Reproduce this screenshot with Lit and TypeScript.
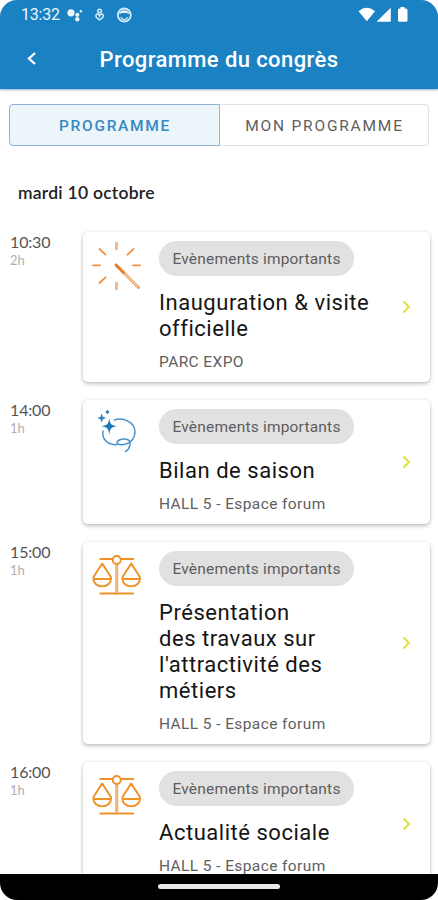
import { LitElement, html, css, svg } from "lit";
import { customElement, property } from "lit/decorators.js";

type IconName = "spark" | "bubble" | "scales";

interface Session {
  time: string;
  duration: string;
  icon: IconName;
  title: string[];
  place: string;
}

const sessions: Session[] = [
  { time: "10:30", duration: "2h", icon: "spark", title: ["Inauguration & visite", "officielle"], place: "PARC EXPO" },
  { time: "14:00", duration: "1h", icon: "bubble", title: ["Bilan de saison"], place: "HALL 5 - Espace forum" },
  {
    time: "15:00",
    duration: "1h",
    icon: "scales",
    title: ["Présentation", "des travaux sur", "l'attractivité des", "métiers"],
    place: "HALL 5 - Espace forum",
  },
  { time: "16:00", duration: "1h", icon: "scales", title: ["Actualité sociale"], place: "HALL 5 - Espace forum" },
];

const icons = {
  spark: svg`
    <g fill="none" stroke="#ee9140" stroke-width="1.8" stroke-linecap="round">
      <path d="M7.500 8l6 5.700M41.500 8l-6 5.700M1 24.300h7M41 24.300h7M7.500 42l6-5.700"/>
      <path d="M24.500 1v8M24.500 41v8" stroke="#f3b78c" stroke-width="2.800" stroke-linecap="butt"/>
      <path d="M24 24l22.500 22.500" stroke="#efa360" stroke-width="3"/>
      <path d="M33 33l12.500 12.500" stroke="#fbe3cc" stroke-width="1"/>
      <path d="M24 24l7.500 7.500" stroke="#ea7d20" stroke-width="2.600"/>
    </g>`,
  bubble: svg`
    <g fill="none" stroke="#4a93cb" stroke-width="1.500" stroke-linecap="round">
      <path d="M22.500 11C31 8 43 13 43 23C43 29 39 33.500 34 35C30 36.300 25.500 36 25 34C25 31 31 29 35.500 30.500C40 32.500 38 40 33.500 42.500"/>
      <path d="M11 22C9.500 31 17 36.500 25 35.500"/>
    </g>
    <path fill="#1b78ba" d="M17.300 9C18 15.300 19.400 16.600 25.500 17.300C19.400 18 18 19.300 17.300 26C16.600 19.300 15.200 18 8.500 17.300C15.200 16.600 16.600 15.300 17.300 9Z"/>
    <path fill="#2f84c1" d="M9.700 4.500l1.200 3.300 3.200 1.200-3.200 1.200-1.200 3.300-1.200-3.300-3.200-1.200 3.200-1.200zM15.400 .8l2.200 2.200-2.200 2.200-2.200-2.200z"/>`,
  scales: svg`
    <g fill="none" stroke="#ee9126" stroke-width="1.900" stroke-linecap="round" stroke-linejoin="round" transform="translate(-.3 2.500)">
      <path d="M8.500 5.500H20.500M29.500 5.500H41.500M8.500 40H41.500"/>
      <path d="M25 10.500v29" stroke="#f3b37c" stroke-width="3.200" stroke-linecap="butt"/>
      <circle cx="25" cy="6.500" r="4"/>
      <path d="M10.500 10L1.800 23.500C0 36 21 36 19.200 23.500ZM2 25.500H19M39.500 10L30.800 23.500C29 36 50 36 48.200 23.500ZM31 25.500H48"/>
    </g>`,
};

@customElement("session-row")
class SessionRow extends LitElement {
  @property({ attribute: false }) session!: Session;

  static styles = css`
    :host { display: grid; grid-template-columns: 73px 347px; }
    .when { font-family: Lato, sans-serif; }
    .time { font-size: 16px; line-height: 20px; color: #555; letter-spacing: -0.15px; }
    .duration { font-size: 13px; line-height: 17px; color: #b0b0b0; }
    .card {
      display: grid;
      grid-template-columns: 50px 1fr 14px;
      column-gap: 17px;
      padding: 9px 15px 9px 9px;
      box-sizing: border-box;
      border-radius: 5px;
      background: #fff;
      box-shadow: 0 2px 4px rgba(0, 0, 0, 0.24), 0 0 3px rgba(0, 0, 0, 0.08);
    }
    .icon { width: 50px; height: 50px; display: block; }
    .chip {
      display: inline-flex;
      align-items: center;
      justify-content: center;
      width: 195px;
      height: 35px;
      border-radius: 18px;
      background: #e1e1e1;
      font-size: 15.5px;
      letter-spacing: 0.2px;
      color: #5d5d5d;
      white-space: nowrap;
    }
    .body { display: flex; flex-direction: column; align-items: flex-start; }
    .title { margin-top: 14px; font-size: 22px; line-height: 26px; letter-spacing: 0.53px; color: #151515; white-space: nowrap; }
    .place { margin-top: 10px; font-size: 15.5px; line-height: 21px; letter-spacing: 0.4px; color: #606060; white-space: nowrap; }
    .chevron { align-self: center; width: 14px; height: 16px; }
  `;

  render() {
    const s = this.session;
    return html`
      <div class="when">
        <div class="time">${s.time}</div>
        <div class="duration">${s.duration}</div>
      </div>
      <div class="card">
        <svg class="icon" viewBox="0 0 50 50">${icons[s.icon]}</svg>
        <div class="body">
          <span class="chip">Evènements importants</span>
          <div class="title">${s.title.map((line) => html`<div>${line}</div>`)}</div>
          <div class="place">${s.place}</div>
        </div>
        <svg class="chevron" viewBox="0 0 14 16">
          <path d="M2.500 2.500L8 8L2.500 13.500" fill="none" stroke="#dce545" stroke-width="2.200" />
        </svg>
      </div>
    `;
  }
}

@customElement("app-root")
class AppRoot extends LitElement {
  static styles = css`
    :host { display: block; width: 438px; height: 900px; font-family: Roboto, sans-serif; background: #fff; }
    .screen { display: flex; flex-direction: column; height: 900px; border-radius: 17px; overflow: hidden; }
    .top { flex: none; height: 89px; background: #1a82c3; color: #fff; box-shadow: 0 1px 2px rgba(40, 90, 140, 0.5); }
    .status { display: flex; align-items: center; height: 29px; padding: 0 30px 0 21px; }
    .clock { font-size: 16px; letter-spacing: -0.2px; width: 46px; opacity: 0.93; }
    .notes { width: 66px; height: 18px; }
    .signals { width: 50px; height: 18px; margin-left: auto; }
    .bar { display: grid; grid-template-columns: 64px 1fr 64px; align-items: center; height: 60px; }
    .back { width: 16px; height: 20px; margin-left: 24px; }
    .heading { margin: 0; text-align: center; font-size: 22px; font-weight: 500; letter-spacing: 0.4px; white-space: nowrap; }
    .tabs { flex: none; display: grid; grid-template-columns: 211px 209px; height: 42px; margin: 15px 9px 0; }
    .tab {
      display: flex; align-items: center; justify-content: center; box-sizing: border-box; padding: 1px 0 0 1px;
      font-size: 15.500px; letter-spacing: 1.800px; color: #606060;
      border: 1px solid #e2e2e2; border-left: 0; border-radius: 0 4px 4px 0;
    }
    .tab.active { color: #3688c3; background: #ecf5fa; border: 1px solid #8eb2d8; border-radius: 4px 0 0 4px; font-weight: 500; letter-spacing: 1.700px; }
    .day { flex: none; margin: 36px 0 0 18px; font-family: Lato, sans-serif; font-size: 17.500px; font-weight: 600; line-height: 22px; letter-spacing: 0.25px; color: #222; }
    .list { flex: 1; min-height: 0; overflow: hidden; display: flex; flex-direction: column; gap: 18px; padding: 28px 0 0 10px; }
    session-row { flex: none; }
    .nav { flex: none; height: 26px; background: #000; display: flex; justify-content: center; }
    .handle { width: 122px; height: 5px; border-radius: 3px; background: #e8e8e8; margin-top: 10px; }
  `;

  render() {
    return html`
      <div class="screen">
        <header class="top">
          <div class="status">
            <span class="clock">13:32</span>
            <svg class="notes" viewBox="67 5 66 18">
              <g fill="#e9f4fb">
                <circle cx="71" cy="11.800" r="3.600" />
                <circle cx="77.300" cy="13.800" r="2.100" />
                <circle cx="77.300" cy="18.300" r="2.200" />
                <circle cx="80.800" cy="10.300" r="1.200" />
              </g>
              <g fill="none" stroke="#d5eaf8" stroke-width="1.500">
                <circle cx="99.600" cy="10" r="1.800" />
                <path d="M99.600 18.800C96.500 17 95.300 15.500 96 14C97 12.500 99 13 99.600 14.800C100.200 13 102.200 12.500 103.200 14C103.900 15.500 102.700 17 99.600 18.800Z" />
                <circle cx="124.300" cy="14" r="6.500" stroke-width="1.800" />
              </g>
              <path d="M118.800 13c1.500-5 9.500-5 11 0c-3-1.500-8-1.500-11 0z" fill="#e2f1fa" />
              <path d="M121 16c1 3.500 5.600 3.500 6.600 0" fill="none" stroke="#b6d9ef" stroke-width="1.300" />
            </svg>
            <svg class="signals" viewBox="358 5 50 18">
              <path d="M358.500 10.200Q366.800 3.400 375 10.200L366.800 20.200Z M376.500 20.700L390.800 6.800V20.700Z M400.500 6h4v1.500h1.500q1.500 0 1.500 1.500v10.200q0 1.500-1.500 1.500h-6.500q-1.500 0-1.500-1.500V9q0-1.500 1.500-1.500h1z" fill="#fff" />
            </svg>
          </div>
          <div class="bar">
            <svg class="back" viewBox="0 0 16 20">
              <path d="M11 4L5 9.500L11 15" fill="none" stroke="#fff" stroke-width="2.300" />
            </svg>
            <h1 class="heading">Programme du congrès</h1>
          </div>
        </header>
        <nav class="tabs">
          <div class="tab active">PROGRAMME</div>
          <div class="tab">MON PROGRAMME</div>
        </nav>
        <div class="day">mardi 10 octobre</div>
        <main class="list">
          ${sessions.map((s) => html`<session-row .session=${s}></session-row>`)}
        </main>
        <footer class="nav"><div class="handle"></div></footer>
      </div>
    `;
  }
}
